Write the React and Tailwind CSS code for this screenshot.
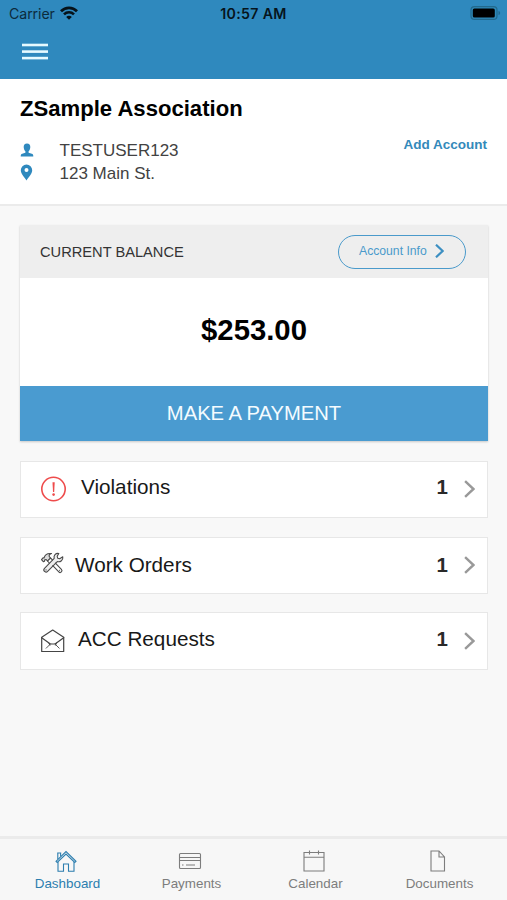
import React from "react";

function Chevron({ className }) {
  return (
    <svg viewBox="0 0 10 16" fill="none" stroke="currentColor" className={className}>
      <path d="M1 0.8 8.6 8 1 15.2" />
    </svg>
  );
}

function StatusBar() {
  return (
    <div className="flex h-7 items-center justify-between pl-[9px] pr-[6px] font-[Inter,sans-serif] text-black">
      <div className="flex w-[180px] items-center gap-[5px]">
        <span className="text-[14.2px] leading-7 tracking-[-0.1px] text-[#0c2b3c]">Carrier</span>
        <svg viewBox="0 0 18 14" fill="none" stroke="#061219" className="-mt-[2px] h-[14px] w-[18px]">
          <path d="M1 5.2C5.5.7 12.5.7 17 5.2" strokeWidth="2.8" />
          <path d="M4 8.3c2.800-2.800 7.200-2.800 10 0" strokeWidth="2.600" />
          <path d="M9 13.700 6.200 10.900c1.600-1.500 4-1.500 5.600 0z" fill="#061219" stroke="none" />
        </svg>
      </div>
      <span className="text-center text-[14.2px] leading-7 font-semibold tracking-[0.3px] whitespace-nowrap text-[#06141c]">10:57 AM</span>
      <div className="flex w-[183px] justify-end">
        <svg viewBox="0 0 31 14" className="-mt-[2px] h-[14px] w-[31px]">
          <rect x="1" y=".6" width="26" height="12.800" rx="3.500" fill="#2f89b8" stroke="#22698d" strokeWidth="1.200" />
          <rect x="2.800" y="2.500" width="22" height="9" rx="1.600" fill="#000" />
          <path d="M28.500 5v4c2.200-.8 2.200-3.200 0-4z" fill="#22698d" />
        </svg>
      </div>
    </div>
  );
}

function AlertIcon() {
  return (
    <svg viewBox="0 0 26 26" fill="none" stroke="#ee4b4b" className="mt-[14px] h-[26px] w-[26px]">
      <circle cx="12.500" cy="13" r="11.700" strokeWidth="1.600" />
      <path d="M11.500 6.300h2.200l-.5 9.600H12z" fill="#ee4b4b" stroke="none" />
      <circle cx="12.600" cy="18.600" r="1.300" fill="#ee4b4b" stroke="none" />
    </svg>
  );
}

function ToolsIcon() {
  return (
    <svg viewBox="0.5 0 24 22" fill="none" stroke="#4a4a4a" strokeWidth="1.100" strokeLinejoin="round" strokeLinecap="round" className="mt-[14px] h-[22px] w-[24px]">
      <path d="M1 7.700 2.500 5.800 3.500 6C4.300 3.200 7 1 11 1.600 9 2.300 8.300 3.200 8.800 4.600L10 6l-3 3-1.300-1.400-1.500.2-.2 1.400-1.200.5z" fill="#ddd" />
      <path d="M18.300 1.500c-3.200-.6-5.400 2-4.600 4.900L4 16.300c-2 2.100 1 5.200 3.100 3.100l9.700-9.800c3.200.9 6-1.500 5.500-4.800l-3.100 2-1.900-.5-.6-2z" fill="#eee" />
      <path d="M7 9l1.800 2M10 6l1.900 1.900M14.900 11.100l6 6.200c1.700 1.900-.9 4.300-2.600 2.600l-6-6.200" />
      <path d="M5.500 17.900h.1M19 18.200h.1" />
    </svg>
  );
}

function EnvelopeIcon() {
  return (
    <svg viewBox="0.8 0 24 24" fill="none" stroke="#454545" strokeWidth="1.200" strokeLinejoin="round" strokeLinecap="round" className="mt-[16px] h-[24px] w-[24px]">
      <path d="M1.500 8.300 12.500 1l11 7.300v14.200h-22z" />
      <path d="M1.500 8.700l8.700 6.300h4.600l8.700-6.300" />
      <path d="M10.200 15 6 19.200M14.800 15l4.200 4.200M8.500 13.800l1.200 2.400M16.500 13.800l-1.200 2.400" strokeWidth=".9" />
    </svg>
  );
}

function ListCard({ icon, label, count, className, textClass, countClass, chevronClass }) {
  return (
    <div className={"mr-[19px] ml-5 flex items-start border border-[#e7e7e7] bg-white pl-[20px] pr-[12px] " + className}>
      {icon}
      <span className={"text-[20.700px] leading-6 whitespace-nowrap text-[#181818] " + textClass}>{label}</span>
      <span className={"mr-[16px] ml-auto text-[20.500px] leading-6 font-bold text-[#292929] " + countClass}>{count}</span>
      <Chevron className={"h-[18px] w-[11px] stroke-[2.200] text-[#999] " + chevronClass} />
    </div>
  );
}

function Tab({ label, active, children }) {
  return (
    <div className={"flex flex-1 flex-col items-center " + (active ? "text-[#2c7eaf]" : "text-[#7d7d7d]")}>
      <svg viewBox="0 0 24 24" fill="none" stroke="currentColor" strokeWidth="1.100" className="mt-[10px] mr-[4px] h-6 w-6">
        {children}
      </svg>
      <span className="mt-[3px] text-[13.400px] leading-4">{label}</span>
    </div>
  );
}

export default function App() {
  return (
    <div className="flex h-[900px] w-[507px] flex-col overflow-hidden bg-[#f8f8f8] font-['Liberation_Sans',Arial,sans-serif]">
      <header className="h-[79px] shrink-0 bg-[#2f89be]">
        <StatusBar />
        <svg viewBox="0 0 26 18" fill="#e6faff" className="mt-[15px] ml-[22px] h-[18px] w-[26px]">
          <rect y=".7" width="26" height="2.600" />
          <rect y="7.300" width="26" height="2.600" />
          <rect y="13.800" width="26" height="2.600" />
        </svg>
      </header>

      <section className="h-[127px] shrink-0 border-b-2 border-[#ebebeb] bg-white px-5 pt-[16px]">
        <h1 className="text-[22.100px] leading-7 font-bold text-black">ZSample Association</h1>
        <div className="flex justify-between">
          <div className="mt-[16px] text-[17px] leading-[23px] text-[#424242]">
            <div className="flex items-center">
              <svg viewBox="0 0 14 14" fill="#2f89be" className="-mt-[2px] mr-[25.500px] h-[14px] w-[14px]">
                <path d="M7 .5c2.300 0 3.500 1.500 3.300 3.700C10.100 6.500 9.200 7.600 8.600 8.300v1.500l3.200 1c1 .3 1.500.9 1.500 2.600H.7c0-1.700.5-2.300 1.500-2.600l3.200-1V8.300C4.800 7.600 3.900 6.500 3.700 4.200 3.500 2 4.700.5 7 .5z" />
              </svg>
              TESTUSER123
            </div>
            <div className="flex items-center">
              <svg viewBox="0 0 14 17" fill="#2f89be" className="-mt-[2px] mr-[25.500px] h-[17px] w-[14px]">
                <path fillRule="evenodd" d="M6.500.5a5.700 5.700 0 0 1 5.700 5.800c0 3.600-3.200 6.200-5.700 10.200C4 12.500.8 9.900.8 6.300A5.700 5.700 0 0 1 6.500.5zm0 3.500a2 2 0 1 0 0 4 2 2 0 0 0 0-4z" />
              </svg>
              123 Main St.
            </div>
          </div>
          <a className="mt-[14px] text-[13.500px] leading-4 font-bold text-[#3389ba]">Add Account</a>
        </div>
      </section>

      <section className="mr-[19px] ml-5 mt-[19px] h-[216px] shrink-0 bg-white shadow-[0_1px_2px_rgba(0,0,0,0.2)]">
        <div className="flex h-[53px] items-center justify-between bg-[#eee] pr-[22px] pl-5">
          <h2 className="mt-[3px] text-[14.650px] text-[#333]">CURRENT BALANCE</h2>
          <button className="flex h-[34px] w-[128px] items-center rounded-full border-[1.500px] border-[#4a9acb] pl-5 text-[12.200px] text-[#4a9acb]">
            Account Info
            <Chevron className="-mt-px ml-[8px] h-[14px] w-[9px] stroke-[2.500] text-[#3c8fc2]" />
          </button>
        </div>
        <div className="flex h-[108px] items-center justify-center pb-[5px] text-[29.300px] font-bold text-black">$253.00</div>
        <button className="flex h-[55px] w-full items-center justify-center bg-[#4a9bd0] text-[20.200px] text-[#f4fbff]">MAKE A PAYMENT</button>
      </section>

      <ListCard icon={<AlertIcon />} label="Violations" count="1" className="mt-[20px] h-[57px]" textClass="ml-[14px] mt-[13px]" countClass="mt-[13px]" chevronClass="mt-[18px]" />
      <ListCard icon={<ToolsIcon />} label="Work Orders" count="1" className="mt-[19px] h-[57px]" textClass="ml-[10px] mt-[15px]" countClass="mt-[15px]" chevronClass="mt-[18px]" />
      <ListCard icon={<EnvelopeIcon />} label="ACC Requests" count="1" className="mt-[18px] h-[58px]" textClass="ml-[13px] mt-[14px]" countClass="mt-[14px]" chevronClass="mt-[19px]" />

      <nav className="mt-auto flex h-[64px] shrink-0 border-t-[3px] border-[#ebebeb] bg-[#f7f7f7] px-[5.500px]">
        <Tab label="Dashboard" active>
          <path d="M2 12.300 12 2.500l10 9.800-1.200 1.200L12 5 3.200 13.500z" />
          <path d="M4 13v9.300h5.500V15h5v7.300H20V13M3.800 10V4h2.800v3.300M3.200 4h4" />
        </Tab>
        <Tab label="Payments">
          <rect x="1.500" y="4.500" width="21" height="15" rx="1" />
          <path d="M1.500 8.500h21M1.500 11.500h21M4 16h1.500M8 16h9" />
        </Tab>
        <Tab label="Calendar">
          <path d="M2 3.500h20v18.500H2zM2 8.200h20M7.500 1.500v4M16.500 1.500v4" />
        </Tab>
        <Tab label="Documents">
          <path d="M5 2h8l5.500 6v14H5zM13 2v6h5.500" />
        </Tab>
      </nav>
    </div>
  );
}
